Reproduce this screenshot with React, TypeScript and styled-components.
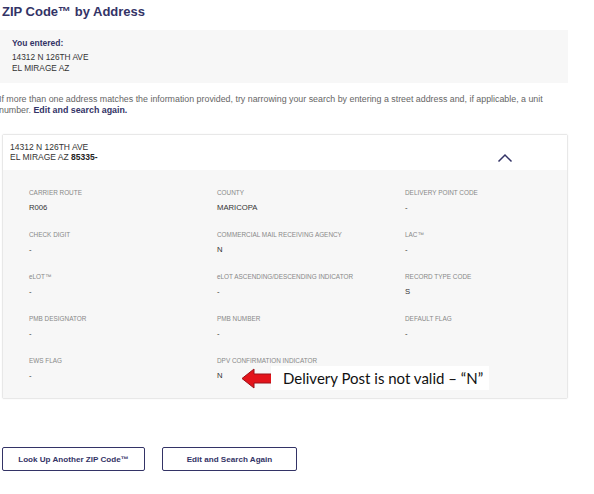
import React from 'react';
import styled, { createGlobalStyle } from 'styled-components';

const GlobalStyle = createGlobalStyle`
  body {
    margin: 0;
    background: #fff;
    font-family: "Liberation Sans", Arial, sans-serif;
    color: #333;
  }
`;

const Page = styled.div`
  width: 568px;
  padding-top: 4px;
`;

const Title = styled.h1`
  margin: 0 0 10px 2px;
  font-size: 13px;
  line-height: 16px;
  font-weight: bold;
  color: #333366;
`;

const EnteredBox = styled.div`
  background: #f7f7f7;
  padding: 8px 12px 9px;
  font-size: 8.3px;
  line-height: 11px;
  color: #333;
`;

const EnteredLabel = styled.div`
  font-size: 8.5px;
  font-weight: bold;
  color: #333366;
  margin-bottom: 3px;
`;

const Note = styled.p`
  margin: 11px 0 0 -1px;
  font-size: 8.85px;
  line-height: 11px;
  color: #666;

  b {
    color: #333366;
  }
`;

const Card = styled.div`
  margin: 18px 0 0 2px;
  border: 1px solid #e8e8e8;
  border-radius: 2px;
  box-shadow: 0 0 2px rgba(0, 0, 0, 0.06);
`;

const CardHeader = styled.div`
  display: flex;
  justify-content: space-between;
  align-items: flex-start;
  height: 35px;
  padding: 7px 54px 0 7px;
  box-sizing: border-box;
  background: #fff;
  font-size: 8.5px;
  line-height: 10px;
  color: #333;

  b {
    color: #222;
  }
`;

const Chevron = styled.svg`
  width: 16px;
  height: 10px;
  margin-top: 11px;
`;

const Details = styled.div`
  display: grid;
  grid-template-columns: 188px 188px 1fr;
  row-gap: 17px;
  background: #f7f7f7;
  padding: 18px 0 17px 26px;
`;

const Cell = styled.div`
  position: relative;
  display: flex;
  flex-direction: column;
  gap: 5px;
`;

const Label = styled.div`
  font-size: 6.4px;
  line-height: 10px;
  color: #888;
  white-space: nowrap;
`;

const Value = styled.div`
  font-size: 7.7px;
  line-height: 10px;
  color: #333;
`;

const Callout = styled.div`
  position: absolute;
  left: 24px;
  bottom: -9px;
  display: flex;
  align-items: center;
`;

const CalloutText = styled.div`
  background: #fff;
  margin-left: -4px;
  padding: 2px 6px 2px 12px;
  font-family: Lato, "Open Sans", sans-serif;
  font-size: 15px;
  line-height: 20px;
  color: #111;
  white-space: nowrap;
`;

const Actions = styled.div`
  display: flex;
  gap: 17px;
  margin: 48px 0 0 2px;
`;

const Button = styled.button<{ $width: number }>`
  width: ${p => p.$width}px;
  height: 24px;
  background: #fff;
  border: 1px solid #333366;
  border-radius: 2px;
  font-family: "Liberation Sans", Arial, sans-serif;
  font-size: 8.1px;
  font-weight: bold;
  color: #333366;
  padding: 0;
`;

const rows: [string, string][] = [
  ['CARRIER ROUTE', 'R006'],
  ['COUNTY', 'MARICOPA'],
  ['DELIVERY POINT CODE', '-'],
  ['CHECK DIGIT', '-'],
  ['COMMERCIAL MAIL RECEIVING AGENCY', 'N'],
  ['LAC™', '-'],
  ['eLOT™', '-'],
  ['eLOT ASCENDING/DESCENDING INDICATOR', '-'],
  ['RECORD TYPE CODE', 'S'],
  ['PMB DESIGNATOR', '-'],
  ['PMB NUMBER', '-'],
  ['DEFAULT FLAG', '-'],
  ['EWS FLAG', '-'],
  ['DPV CONFIRMATION INDICATOR', 'N'],
];

const RedArrow = () => (
  <svg width="34" height="21" viewBox="0 0 34 21">
    <polygon
      points="1,10.5 13,1 13,6 33,6 33,15 13,15 13,20"
      fill="#e3141b"
      stroke="#9b1118"
      strokeWidth="1"
    />
  </svg>
);

export default function App() {
  return (
    <>
      <GlobalStyle />
      <Page>
        <Title>ZIP Code™ by Address</Title>
        <EnteredBox>
          <EnteredLabel>You entered:</EnteredLabel>
          <div>14312 N 126TH AVE</div>
          <div>EL MIRAGE AZ</div>
        </EnteredBox>
        <Note>
          If more than one address matches the information provided, try narrowing your search by
          entering a street address and, if applicable, a unit number. <b>Edit and search again.</b>
        </Note>
        <Card>
          <CardHeader>
            <div>
              <div>14312 N 126TH AVE</div>
              <div>
                EL MIRAGE AZ <b>85335-</b>
              </div>
            </div>
            <Chevron viewBox="0 0 16 10">
              <polyline points="1.5,8.5 8,2 14.5,8.5" fill="none" stroke="#333366" strokeWidth="1.5" />
            </Chevron>
          </CardHeader>
          <Details>
            {rows.map(([label, value]) => (
              <Cell key={label}>
                <Label>{label}</Label>
                <Value>{value}</Value>
                {label === 'DPV CONFIRMATION INDICATOR' && (
                  <Callout>
                    <RedArrow />
                    <CalloutText>Delivery Post is not valid – “N”</CalloutText>
                  </Callout>
                )}
              </Cell>
            ))}
          </Details>
        </Card>
        <Actions>
          <Button $width={143}>Look Up Another ZIP Code™</Button>
          <Button $width={135}>Edit and Search Again</Button>
        </Actions>
      </Page>
    </>
  );
}
